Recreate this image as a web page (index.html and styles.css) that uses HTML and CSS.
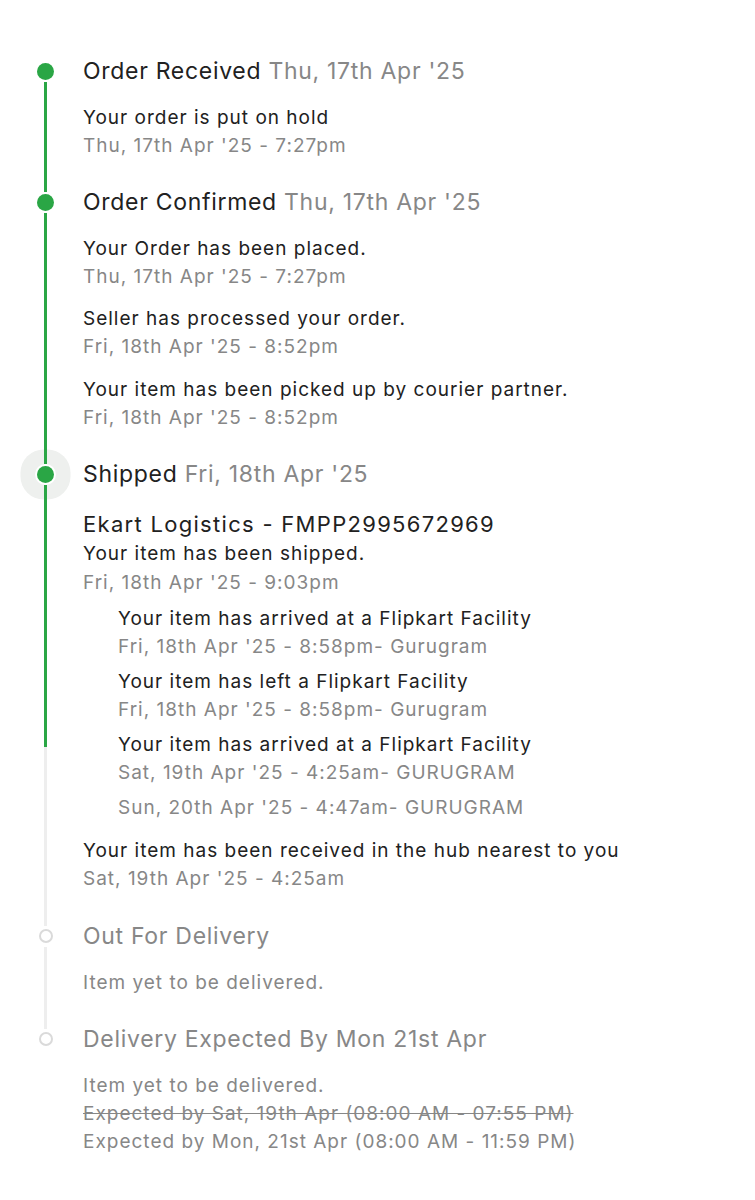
FILE: index.html
```html
<!DOCTYPE html>
<html lang="en">
<head>
<meta charset="utf-8">
<title>Order tracking</title>
<link rel="stylesheet" href="styles.css">
</head>
<body>
<div class="timeline">

  <section class="stage">
    <div class="rail">
      <span class="dot done"></span>
      <span class="line green"></span>
    </div>
    <div class="content">
      <h2 class="heading">Order Received <span class="muted">Thu, 17th Apr '25</span></h2>
      <div class="events">
        <div class="event">
          <p class="msg">Your order is put on hold</p>
          <p class="time">Thu, 17th Apr '25 - 7:27pm</p>
        </div>
      </div>
    </div>
  </section>

  <section class="stage">
    <div class="rail">
      <span class="dot done"></span>
      <span class="line green"></span>
    </div>
    <div class="content">
      <h2 class="heading">Order Confirmed <span class="muted">Thu, 17th Apr '25</span></h2>
      <div class="events">
        <div class="event">
          <p class="msg">Your Order has been placed.</p>
          <p class="time">Thu, 17th Apr '25 - 7:27pm</p>
        </div>
        <div class="event">
          <p class="msg">Seller has processed your order.</p>
          <p class="time">Fri, 18th Apr '25 - 8:52pm</p>
        </div>
        <div class="event">
          <p class="msg">Your item has been picked up by courier partner.</p>
          <p class="time">Fri, 18th Apr '25 - 8:52pm</p>
        </div>
      </div>
    </div>
  </section>

  <section class="stage stage-shipped">
    <div class="rail">
      <span class="dot done current"></span>
      <span class="line green shipped-progress"></span>
      <span class="line grey"></span>
    </div>
    <div class="content">
      <h2 class="heading">Shipped <span class="muted">Fri, 18th Apr '25</span></h2>
      <p class="courier">Ekart Logistics - FMPP2995672969</p>
      <div class="event tight">
        <p class="msg">Your item has been shipped.</p>
        <p class="time">Fri, 18th Apr '25 - 9:03pm</p>
      </div>
      <div class="sub-events">
        <div class="event">
          <p class="msg">Your item has arrived at a Flipkart Facility</p>
          <p class="time">Fri, 18th Apr '25 - 8:58pm- Gurugram</p>
        </div>
        <div class="event">
          <p class="msg">Your item has left a Flipkart Facility</p>
          <p class="time">Fri, 18th Apr '25 - 8:58pm- Gurugram</p>
        </div>
        <div class="event">
          <p class="msg">Your item has arrived at a Flipkart Facility</p>
          <p class="time">Sat, 19th Apr '25 - 4:25am- GURUGRAM</p>
        </div>
        <div class="event">
          <p class="time">Sun, 20th Apr '25 - 4:47am- GURUGRAM</p>
        </div>
      </div>
      <div class="event hub">
        <p class="msg">Your item has been received in the hub nearest to you</p>
        <p class="time">Sat, 19th Apr '25 - 4:25am</p>
      </div>
    </div>
  </section>

  <section class="stage">
    <div class="rail">
      <span class="dot pending"></span>
      <span class="line grey"></span>
    </div>
    <div class="content">
      <h2 class="heading pending-text">Out For Delivery</h2>
      <div class="events">
        <div class="event">
          <p class="time">Item yet to be delivered.</p>
        </div>
      </div>
    </div>
  </section>

  <section class="stage last">
    <div class="rail">
      <span class="dot pending"></span>
    </div>
    <div class="content">
      <h2 class="heading pending-text">Delivery Expected By Mon 21st Apr</h2>
      <div class="events">
        <div class="event">
          <p class="time">Item yet to be delivered.</p>
          <p class="time struck">Expected by Sat, 19th Apr (08:00 AM - 07:55 PM)</p>
          <p class="time">Expected by Mon, 21st Apr (08:00 AM - 11:59 PM)</p>
        </div>
      </div>
    </div>
  </section>

</div>
</body>
</html>
```

FILE: styles.css
```css
* {
  box-sizing: border-box;
}

html, body {
  margin: 0;
  padding: 0;
  background: #ffffff;
}

body {
  font-family: Inter, "Noto Sans", "Liberation Sans", sans-serif;
  color: #212121;
  -webkit-font-smoothing: antialiased;
}

.timeline {
  padding: 62.5px 0 40px 0;
}

.stage {
  display: flex;
  align-items: stretch;
}

.rail {
  width: 83px;
  flex: 0 0 83px;
  display: flex;
  flex-direction: column;
  align-items: flex-start;
  padding-left: 37px;
}

.dot {
  display: block;
  width: 17px;
  height: 17px;
  border-radius: 50%;
  flex: 0 0 auto;
}

.dot.done {
  background: #2aa645;
}

.dot.current {
  box-shadow: 0 0 0 2px #ffffff, 0 0 0 16.5px #eef0ee;
}

.dot.pending {
  width: 14px;
  height: 14px;
  margin: 1.5px;
  border: 2.5px solid #dadada;
  background: #ffffff;
}

.line {
  position: relative;
  z-index: 1;
  display: block;
  width: 3px;
  margin-left: 7px;
}

.line.green {
  background: #2aa645;
  flex: 1 1 auto;
  margin-top: 2px;
  margin-bottom: 2px;
}

.line.grey {
  background: #eeeeee;
  flex: 1 1 auto;
  margin-top: 2px;
  margin-bottom: 2px;
}

.line.shipped-progress {
  flex: 0 0 262.5px;
  margin-bottom: 0;
}

.stage-shipped .line.grey {
  margin-top: 0;
}

.content {
  flex: 1 1 auto;
  padding-bottom: 34px;
}

.stage-shipped .content {
  padding-bottom: 35px;
}

.stage.last .content {
  padding-bottom: 0;
}

.heading {
  margin: 0;
  font-size: 23px;
  font-weight: 400;
  line-height: 17px;
  letter-spacing: 0.7px;
  color: #212121;
  white-space: nowrap;
}

.heading .muted {
  color: #878787;
}

.heading.pending-text {
  color: #878787;
}

.events {
  margin-top: 24px;
  display: flex;
  flex-direction: column;
  gap: 14.5px;
}

.event {
  display: flex;
  flex-direction: column;
}

.msg, .time {
  margin: 0;
  font-size: 19px;
  line-height: 28px;
  letter-spacing: 1px;
  white-space: nowrap;
}

.msg {
  color: #212121;
}

.time {
  color: #878787;
}

.time.struck {
  text-decoration: line-through;
}

.courier {
  margin: 26px 0 0 0;
  font-size: 22px;
  line-height: 30px;
  letter-spacing: 1.3px;
  color: #212121;
}

.event.tight .msg,
.event.tight .time {
  line-height: 29px;
}

.sub-events {
  margin: 8px 0 0 35px;
  display: flex;
  flex-direction: column;
  gap: 7px;
}

.event.hub {
  margin-top: 15px;
}
```
